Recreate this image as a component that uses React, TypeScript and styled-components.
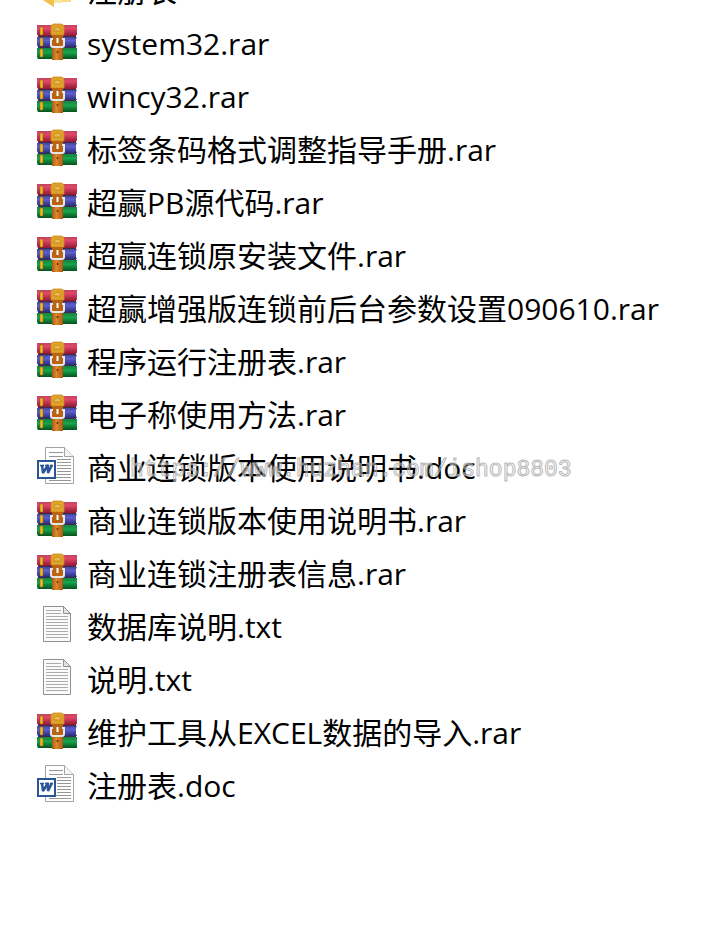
import React from 'react';
import styled, { createGlobalStyle } from 'styled-components';

type FileKind = 'folder' | 'rar' | 'doc' | 'txt';

interface FileItem {
  name: string;
  kind: FileKind;
  watermark?: string;
}

const files: FileItem[] = [
  { name: '注册表', kind: 'folder' },
  { name: 'system32.rar', kind: 'rar' },
  { name: 'wincy32.rar', kind: 'rar' },
  { name: '标签条码格式调整指导手册.rar', kind: 'rar' },
  { name: '超赢PB源代码.rar', kind: 'rar' },
  { name: '超赢连锁原安装文件.rar', kind: 'rar' },
  { name: '超赢增强版连锁前后台参数设置090610.rar', kind: 'rar' },
  { name: '程序运行注册表.rar', kind: 'rar' },
  { name: '电子称使用方法.rar', kind: 'rar' },
  { name: '商业连锁版本使用说明书.doc', kind: 'doc', watermark: 'https://www.huzhan.com/ishop8803' },
  { name: '商业连锁版本使用说明书.rar', kind: 'rar' },
  { name: '商业连锁注册表信息.rar', kind: 'rar' },
  { name: '数据库说明.txt', kind: 'txt' },
  { name: '说明.txt', kind: 'txt' },
  { name: '维护工具从EXCEL数据的导入.rar', kind: 'rar' },
  { name: '注册表.doc', kind: 'doc' },
];

const GlobalStyle = createGlobalStyle`
  body {
    margin: 0;
    background: #ffffff;
    overflow: hidden;
  }
`;

const FileList = styled.ul`
  list-style: none;
  margin: -36px 0 0;
  padding: 0 0 0 36px;
`;

const FileRow = styled.li`
  position: relative;
  display: flex;
  align-items: center;
  gap: 9px;
  height: 53px;
`;

const Icon = styled.svg`
  flex: none;
  display: block;
  width: 42px;
  height: 42px;
  margin-bottom: 3px;
`;

const FileName = styled.span`
  color: #000000;
  font-family: 'Open Sans', 'Noto Sans CJK SC', sans-serif;
  font-size: 30px;
  line-height: 52px;
  white-space: nowrap;
`;

const Watermark = styled.span`
  position: absolute;
  left: 94px;
  top: 15px;
  color: rgba(255, 255, 255, 0.3);
  -webkit-text-stroke: 1px rgba(165, 165, 165, 0.8);
  font-family: 'Liberation Mono', monospace;
  font-size: 23px;
  line-height: 28px;
  white-space: nowrap;
  pointer-events: none;
`;

const FolderIcon: React.FC = () => (
  <Icon viewBox="0 0 42 42" aria-hidden="true">
    <path d="M7 3h13l4 4h11v27H18v5L7 32z" fill="#f9dc83" />
    <path d="M7 32l11-3v10z" fill="#f2c14e" />
    <path d="M18 29h8v6h-8z" fill="#fbe6a6" />
  </Icon>
);

// Tre libri legati da una cinghia
const RarIcon: React.FC = () => (
  <Icon viewBox="0 0 42 42" aria-hidden="true">
    <defs>
      <linearGradient id="bookRed" x2="0" y2="1">
        <stop offset="0" stopColor="#c0455f" />
        <stop offset="0.3" stopColor="#e2476b" />
        <stop offset="1" stopColor="#8f1733" />
      </linearGradient>
      <linearGradient id="bookBlue" x2="0" y2="1">
        <stop offset="0" stopColor="#45459c" />
        <stop offset="0.35" stopColor="#5c60cc" />
        <stop offset="1" stopColor="#2b2b78" />
      </linearGradient>
      <linearGradient id="bookGreen" x2="0" y2="1">
        <stop offset="0" stopColor="#178242" />
        <stop offset="0.4" stopColor="#17a54b" />
        <stop offset="1" stopColor="#07501f" />
      </linearGradient>
      <linearGradient id="strap">
        <stop offset="0" stopColor="#a3580f" />
        <stop offset="0.4" stopColor="#dd8a30" />
        <stop offset="1" stopColor="#a5520b" />
      </linearGradient>
    </defs>
    <path d="M1 4h40v9l-1 2H2l-1-2z" fill="url(#bookRed)" />
    <path d="M1 16h40l-1 2v6l1 2H2l-1-2z" fill="url(#bookBlue)" />
    <path d="M1 27h40v11H2l-1-2z" fill="url(#bookGreen)" />
    <path d="M2 15.500h38M2 26.500h38" stroke="#3d2c45" strokeWidth="1" />
    <path d="M4 6v8h3V6zM4 17v8h3v-8zM4 28v8h3v-8z" fill="#f6b91d" stroke="#7d5a20" strokeWidth="0.500" />
    <path d="M16 13h11v26H16z" fill="url(#strap)" />
    <path d="M15 5q1-2 3-2h7q2 0 3 2v9H15z" fill="#dfa32b" stroke="#c98a1c" strokeWidth="0.800" />
    <path d="M18 10V8q3-4 7 0v2z" fill="#eabb4b" stroke="#bf8421" strokeWidth="0.800" />
    <path d="M16 14h11v12H16z" fill="#b86412" />
    <path d="M17 18h-2v6q0 2 2 2h9q2 0 2-2v-6h-2" fill="none" stroke="#e6e6e6" strokeWidth="2" />
    <path d="M21.500 17v5" stroke="#ffffff" strokeWidth="2" />
    <path d="M18 28v10M25 28v10" stroke="#c97929" strokeWidth="0.800" />
    <circle cx="21.500" cy="31" r="1" fill="#693204" />
  </Icon>
);

const DocIcon: React.FC = () => (
  <Icon viewBox="0 0 42 42" aria-hidden="true">
    <path d="M9.500 2.500h19l9 9v27h-28z" fill="#ffffff" stroke="#a3a3a3" />
    <path d="M28.500 2.500v9h9" fill="#f4f4f4" stroke="#a3a3a3" />
    <path
      d="M13 7.500h14M13 11.500h14M21 14.500h14M21 17.500h14M21 20.500h14M21 23.500h14M21 26.500h14M21 29.500h14M13 32.500h22M13 35.500h22"
      stroke="#979797"
    />
    <path d="M1 15h19v19H1z" fill="#2a5699" />
    <path d="M3 17h15v15H3z" fill="#ffffff" />
    <path d="M4 20.500h4M9 20.500h4M14 20.500h3" stroke="#2a5699" strokeWidth="1.500" />
    <path d="M6 20l1 8l5-8v8l4-8" fill="none" stroke="#2a5699" strokeWidth="2.500" strokeLinejoin="bevel" />
  </Icon>
);

const TxtIcon: React.FC = () => (
  <Icon viewBox="0 0 42 42" aria-hidden="true">
    <path d="M7.500 2.500h20l7 7v28h-27z" fill="#fafafa" stroke="#919191" />
    <path d="M27.500 2.500v7h7z" fill="#e2e2e2" stroke="#919191" />
    <path
      d="M10 6.500h15M10 9.500h15M10 12.500h22M10 15.500h22M10 18.500h22M10 21.500h22M10 24.500h22M10 27.500h22M10 30.500h22M10 33.500h22"
      stroke="#a9adaf"
    />
  </Icon>
);

const icons: Record<FileKind, React.FC> = {
  folder: FolderIcon,
  rar: RarIcon,
  doc: DocIcon,
  txt: TxtIcon,
};

const App: React.FC = () => {
  return (
    <>
      <GlobalStyle />
      <FileList>
        {files.map((file) => {
          const KindIcon = icons[file.kind];
          return (
            <FileRow key={file.name}>
              <KindIcon />
              <FileName>{file.name}</FileName>
              {file.watermark && <Watermark>{file.watermark}</Watermark>}
            </FileRow>
          );
        })}
      </FileList>
    </>
  );
};

export default App;
